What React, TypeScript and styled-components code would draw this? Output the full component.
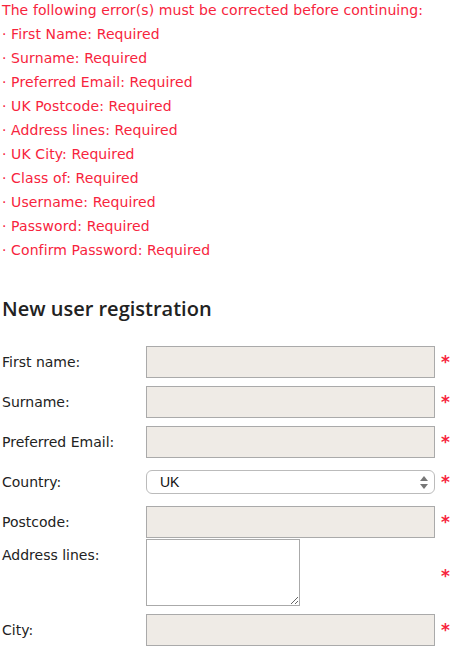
import React from 'react';
import styled, { createGlobalStyle } from 'styled-components';

const GlobalStyle = createGlobalStyle`
  html, body {
    margin: 0;
    padding: 0;
    background: #fff;
  }
  body {
    font-family: 'DejaVu Sans', 'Noto Sans', sans-serif;
    color: #222;
  }
`;

const errors = [
  'First Name',
  'Surname',
  'Preferred Email',
  'UK Postcode',
  'Address lines',
  'UK City',
  'Class of',
  'Username',
  'Password',
  'Confirm Password',
];

const App: React.FC = () => {
  return (
    <Page>
      <GlobalStyle />
      <ErrorBox>
        <ErrorLine>The following error(s) must be corrected before continuing:</ErrorLine>
        {errors.map((field) => (
          <ErrorLine key={field}>· {field}: Required</ErrorLine>
        ))}
      </ErrorBox>

      <Heading>New user registration</Heading>

      <Form>
        <Label>First name:</Label>
        <TextInput />
        <Required>*</Required>

        <Label>Surname:</Label>
        <TextInput />
        <Required>*</Required>

        <Label>Preferred Email:</Label>
        <TextInput />
        <Required>*</Required>

        <Label>Country:</Label>
        <SelectWrap>
          <Select defaultValue="UK">
            <option value="UK">UK</option>
          </Select>
          <SelectArrows />
        </SelectWrap>
        <Required>*</Required>

        <Label>Postcode:</Label>
        <TextInput />
        <Required>*</Required>

        <Label $top>Address lines:</Label>
        <TextArea />
        <Required>*</Required>

        <Label>City:</Label>
        <TextInput />
        <Required>*</Required>
      </Form>
    </Page>
  );
};

const Page = styled.div`
  padding: 0 0 0 2px;
  width: 448px;
  height: 646px;
  overflow: hidden;
`;

const ErrorBox = styled.div`
  color: #f7243d;
  font-size: 14px;
  letter-spacing: 0.1px;
  margin-top: -2px;
`;

const ErrorLine = styled.div`
  line-height: 24px;
  white-space: nowrap;
`;

const Heading = styled.h2`
  margin: 34px 0 0 0;
  font-family: 'Open Sans', 'DejaVu Sans', sans-serif;
  font-size: 20px;
  font-weight: 600;
  line-height: 26px;
  color: #222;
`;

const Form = styled.div`
  display: grid;
  grid-template-columns: 144px 289px 1fr;
  align-items: center;
  margin-top: 20px;
`;

const Label = styled.div<{ $top?: boolean }>`
  font-size: 14px;
  color: #222;
  white-space: nowrap;
  align-self: ${({ $top }) => ($top ? 'start' : 'center')};
  margin-top: ${({ $top }) => ($top ? '5px' : '0')};
`;

const TextInput = styled.input.attrs({ type: 'text' })`
  box-sizing: border-box;
  height: 32px;
  width: 289px;
  margin: 4px 0;
  border: 1px solid #aaa;
  background: #efebe6;
  padding: 0 6px;
  font-size: 14px;
  outline: none;
`;

const TextArea = styled.textarea`
  box-sizing: border-box;
  width: 154px;
  height: 67px;
  margin: -3px 0 4px 0;
  border: 1px solid #aaa;
  background: #fff;
  resize: both;
  font-size: 13px;
  display: block;
  outline: none;
`;

const SelectWrap = styled.div`
  position: relative;
  height: 24px;
  margin: 8px 0;
`;

const Select = styled.select`
  box-sizing: border-box;
  appearance: none;
  width: 289px;
  height: 24px;
  border: 1px solid #bbb;
  border-radius: 6px;
  background: #fff;
  padding: 0 0 0 13px;
  font-family: 'Liberation Sans', Arial, sans-serif;
  font-size: 14px;
  color: #111;
  outline: none;
`;

const ArrowBox = styled.svg`
  position: absolute;
  right: 7px;
  top: 6px;
  pointer-events: none;
`;

const SelectArrows = () => (
  <ArrowBox width="8" height="13" viewBox="0 0 8 13">
    <path d="M4 0 L8 5 L0 5 Z" fill="#777" />
    <path d="M4 13 L8 8 L0 8 Z" fill="#777" />
  </ArrowBox>
);

const Required = styled.span`
  color: #f7243d;
  font-size: 17px;
  font-weight: 700;
  justify-self: end;
  padding-right: 0;
  line-height: 1;
`;

export default App;
